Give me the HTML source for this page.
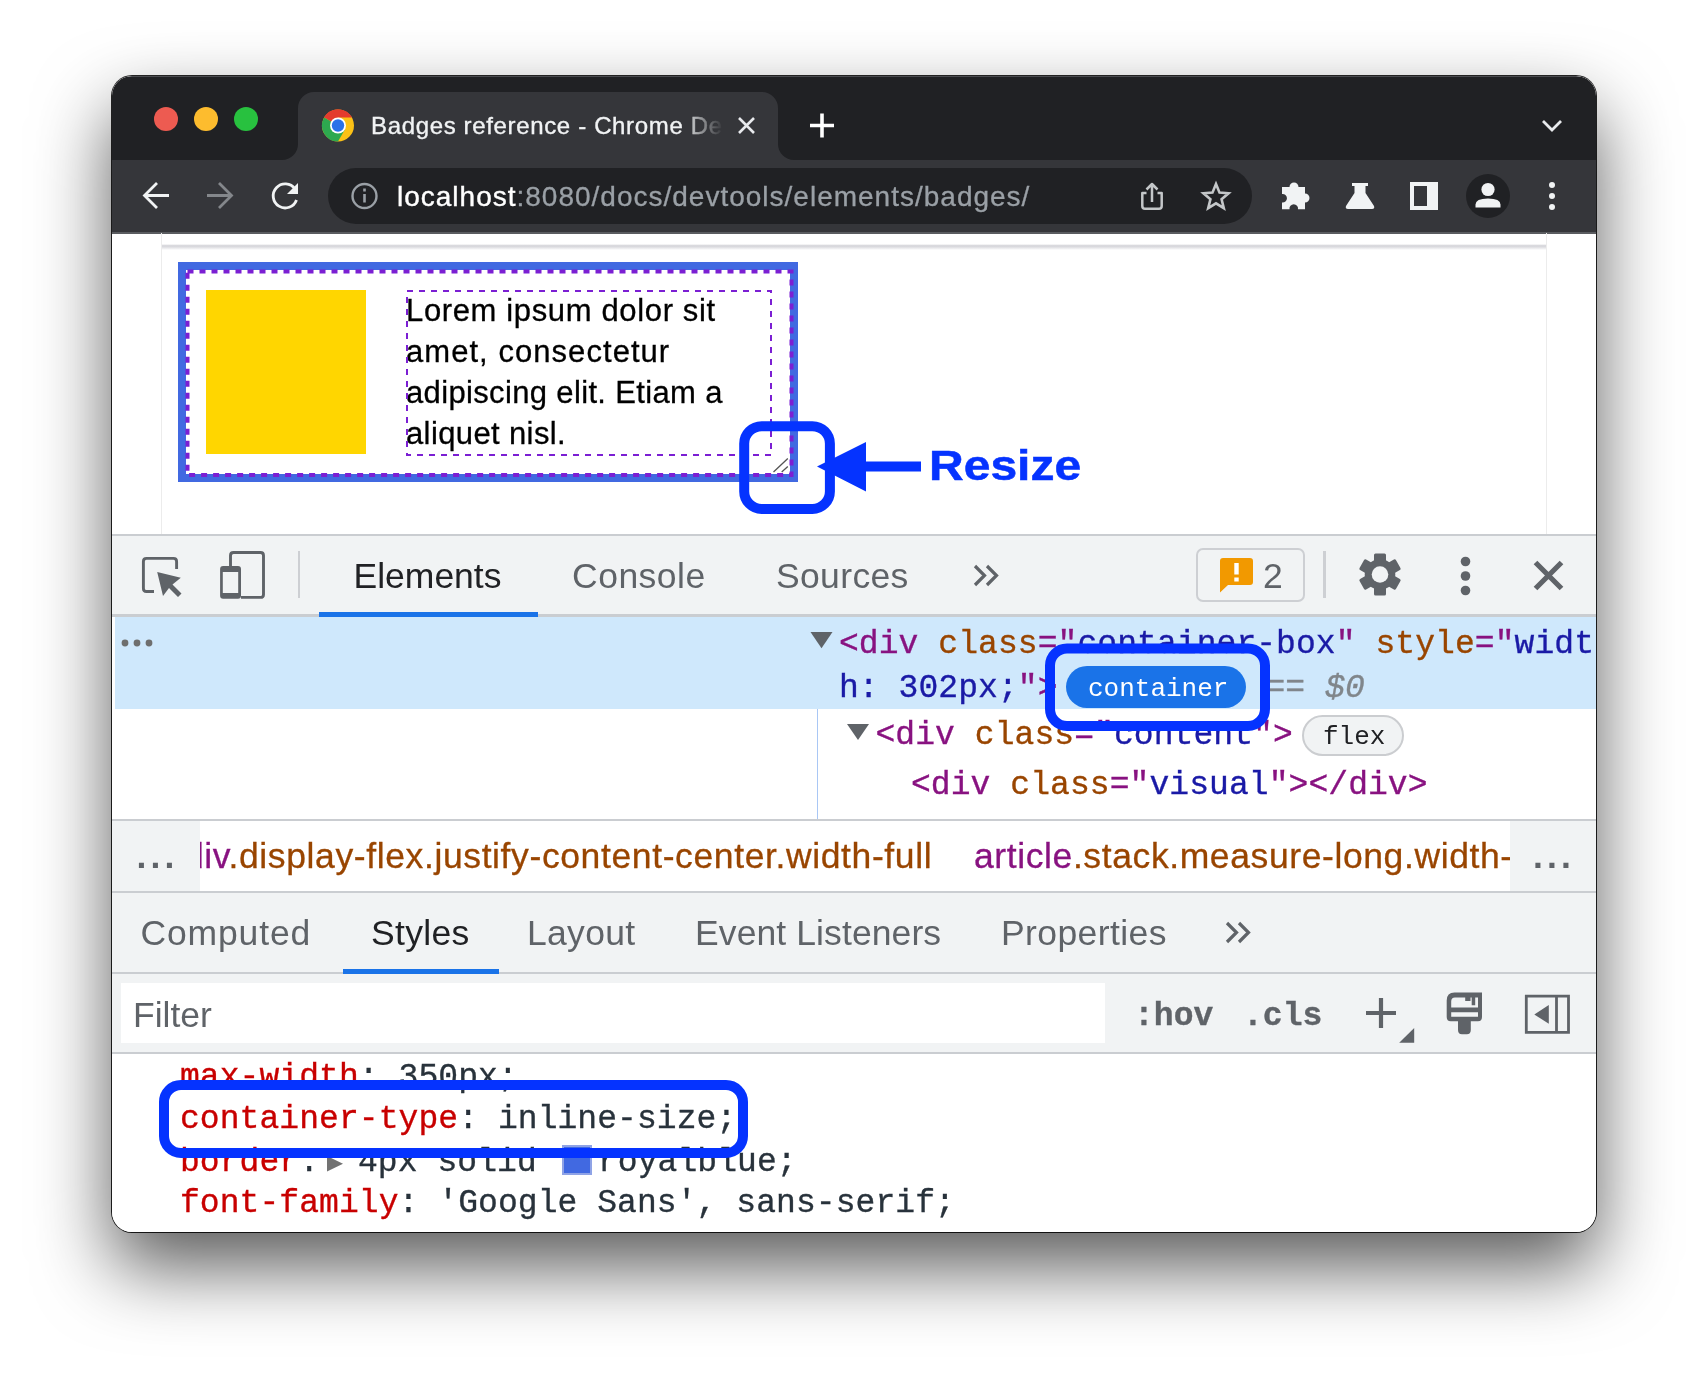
<!DOCTYPE html>
<html><head><meta charset="utf-8">
<style>
html,body{margin:0;padding:0;background:#fff;}
body{width:1708px;height:1380px;position:relative;overflow:hidden;font-family:"Liberation Sans",sans-serif;}
#win{position:absolute;left:112px;top:76px;width:1484px;height:1155.500px;border-radius:20px;overflow:hidden;background:#fff;}
#shadow{position:absolute;left:112px;top:76px;width:1484px;height:1155.500px;border-radius:20px;
 box-shadow:0 0 0 1px rgba(0,0,0,.85),0 35px 76px rgba(0,0,0,.65);}
#in{will-change:transform;position:absolute;left:-112px;top:-76px;width:1708px;height:1380px;}
#in *{position:absolute;box-sizing:border-box;margin:0;white-space:nowrap;}
.mono{font-family:"Liberation Mono",monospace;}
</style></head><body>
<div id="shadow"></div>
<div id="win"><div id="in">
<!-- CHROME -->
<div id="tabstrip" style="left:112px;top:75px;width:1484px;height:85px;background:#202124;"></div>
<div style="left:128px;top:76px;width:1452px;height:1px;background:#4b4c50;"></div>
<div id="toolbar" style="left:112px;top:160px;width:1484px;height:73.500px;background:#35363a;border-bottom:2px solid #5a5c60;"></div>
<svg style="left:0;top:0" width="1708" height="240" viewBox="0 0 1708 240">
 <path d="M282 160 A16 16 0 0 0 298 144 L298 108 A16 16 0 0 1 314 92 L762 92 A16 16 0 0 1 778 108 L778 144 A16 16 0 0 0 794 160 Z" fill="#35363a"/>
 <circle cx="166" cy="119" r="12" fill="#ed5b51"/>
 <circle cx="206" cy="119" r="12" fill="#fdbc2e"/>
 <circle cx="246" cy="119" r="12" fill="#28c13f"/>
 <!-- chrome logo -->
 <g transform="translate(338 125.5)">
  <circle r="16" fill="#fbc116"/>
  <path d="M0 0 L-13.86 -8 A16 16 0 0 1 13.86 -8 Z" fill="#e33b2e"/>
  <path d="M0 0 L-13.86 -8 A16 16 0 0 0 0 16 L6.9 4 Z" fill="#2da94f"/>
  <path d="M-13.86 -8 A16 16 0 0 1 13.86 -8 L0 -8 Z" fill="#e33b2e"/>
  <path d="M0 -8 L13.86 -8 L6.9 4Z" fill="#fbc116"/>
  <circle r="8" fill="#fff"/>
  <circle r="6.2" fill="#2a71e8"/>
 </g>
 <!-- tab close -->
 <path d="M739 118 L754 133 M754 118 L739 133" stroke="#e8eaed" stroke-width="2.6" fill="none"/>
 <!-- new tab plus -->
 <path d="M810 125.5 H834 M822 113.5 V137.5" stroke="#fff" stroke-width="3.6" fill="none"/>
 <!-- chevron -->
 <path d="M1543 121 L1552 130 L1561 121" stroke="#e8eaed" stroke-width="2.8" fill="none"/>
 <!-- omnibox -->
 <rect x="328" y="168" width="924" height="56" rx="28" fill="#202124"/>
 <!-- back -->
 <path d="M169 195.5 H145 M157 183 L144.5 195.5 L157 208" stroke="#f1f3f4" stroke-width="2.8" fill="none" stroke-linejoin="miter"/>
 <!-- forward -->
 <path d="M207 195.5 H231 M219 183 L231.500 195.5 L219 208" stroke="#84878b" stroke-width="2.8" fill="none"/>
 <!-- reload -->
 <path d="M295 189 A12 12 0 1 0 296.500 200" stroke="#f1f3f4" stroke-width="2.8" fill="none"/>
 <path d="M298 183 V194 H287 Z" fill="#f1f3f4"/>
 <!-- info -->
 <circle cx="364.500" cy="196" r="12" stroke="#9aa0a6" stroke-width="2.4" fill="none"/>
 <path d="M364.500 194 V202.500 M364.500 188.500 V191.500" stroke="#9aa0a6" stroke-width="2.6" fill="none"/>
 <!-- share -->
 <path d="M1146.500 193 H1142.300 V206 Q1142.300 208.800 1145 208.800 H1159 Q1161.700 208.800 1161.700 206 V193 H1157.500 M1152 202 V184.500 M1146.500 189.500 L1152 184 L1157.500 189.500" stroke="#c4c7c9" stroke-width="2.500" fill="none" stroke-linejoin="round"/>
 <!-- star -->
 <path transform="translate(1216 197) scale(.93) translate(-1216 -197)" d="M1216 183 L1219.800 192.300 L1229.500 193 L1222 199.400 L1224.400 209 L1216 203.800 L1207.600 209 L1210 199.400 L1202.500 193 L1212.200 192.300 Z" stroke="#c4c7c9" stroke-width="2.800" fill="none" stroke-linejoin="miter"/>
 <!-- puzzle -->
 <path d="M1282 187 H1289.500 A4.500 4.500 0 1 1 1298.500 187 H1305 V193.500 A4.500 4.500 0 1 1 1305 202.500 V209.300 H1298 A4.300 4.300 0 1 0 1289.500 209.300 H1282 V202.500 A4.300 4.300 0 1 0 1282 194 Z" fill="#f1f3f4"/>
 <!-- flask -->
 <path d="M1352 183 H1368 V186 H1365.500 V193 L1374 206 Q1375 209 1372 209 H1348 Q1345 209 1346 206 L1354.500 193 V186 H1352 Z" fill="#f1f3f4"/>
 <!-- side panel -->
 <path d="M1410 182 H1438 V210 H1410 Z M1414 186 V206 H1427 V186 Z" fill="#f1f3f4" fill-rule="evenodd"/>
 <!-- avatar -->
 <circle cx="1488" cy="196" r="22" fill="#202124"/>
 <circle cx="1488" cy="189.500" r="6.600" fill="#f1f3f4"/>
 <path d="M1475.500 207.500 V204.500 Q1475.500 198.500 1488 198.500 Q1500.500 198.500 1500.500 204.500 V207.500 Z" fill="#f1f3f4"/>
 <!-- menu dots -->
 <circle cx="1552" cy="185" r="3" fill="#f1f3f4"/><circle cx="1552" cy="196" r="3" fill="#f1f3f4"/><circle cx="1552" cy="207" r="3" fill="#f1f3f4"/>
</svg>
<div id="tabtitle" style="-webkit-text-stroke:.35px #f1f3f4;left:371px;top:112px;font-size:24px;line-height:28px;color:#f1f3f4;width:352px;overflow:hidden;letter-spacing:.65px;-webkit-mask-image:linear-gradient(90deg,#000 88%,transparent 100%);">Badges reference - Chrome Developers</div>
<div id="url" style="-webkit-text-stroke:.3px currentColor;left:397px;top:181px;font-size:28px;line-height:32px;color:#9aa0a6;letter-spacing:1px;"><span style="position:static;color:#fff;-webkit-text-stroke:.4px #fff">localhost</span>:8080/docs/devtools/elements/badges/</div>
<!-- PAGE -->
<div style="left:161px;top:233px;width:1px;height:302px;background:#ececec;"></div>
<div style="left:1546px;top:233px;width:1px;height:302px;background:#ececec;"></div>
<div style="left:162px;top:244px;width:1384px;height:6px;background:linear-gradient(#fff 0,#d2d2d7 30%,#e6e6e9 65%,#fff 100%);"></div>
<div style="left:178px;top:262px;width:620px;height:220px;border:8px solid #4169e1;"></div>
<div style="left:206px;top:290px;width:160px;height:164px;background:#ffd600;"></div>
<div id="lorem" style="left:406px;top:290px;font-size:31px;line-height:41px;color:#000;letter-spacing:0px;white-space:pre;-webkit-text-stroke:.3px #000;"><span style="position:static;letter-spacing:.64px">Lorem ipsum dolor sit</span>
<span style="position:static;letter-spacing:1.05px">amet, consectetur</span>
<span style="position:static;letter-spacing:.35px">adipiscing elit. Etiam a</span>
<span style="position:static;letter-spacing:.38px">aliquet nisl.</span></div>
<svg style="left:0;top:233px" width="1708" height="302" viewBox="0 233 1708 302">
 <rect x="187.500" y="271.500" width="604" height="203.600" fill="none" stroke="#7b1fd3" stroke-width="4" stroke-dasharray="6 6"/>
 <rect x="407" y="291" width="364" height="164" fill="none" stroke="#7b1fd3" stroke-width="2" stroke-dasharray="6 6"/>
 <path d="M773.500 472 L787.800 458.500 M781.700 472 L787.800 466.400" stroke="#555" stroke-width="1.300" fill="none"/>
 <rect x="744.200" y="426.200" width="85.700" height="82.700" rx="17.500" fill="none" stroke="#0533ff" stroke-width="10"/>
 <path d="M817 466.500 L866 442 V461.500 H921 V471.500 H866 V491.500 Z" fill="#0533ff"/>
</svg>
<div id="resize" style="left:928.500px;top:440.500px;font-size:42.500px;line-height:50px;font-weight:bold;color:#0533ff;transform-origin:0 0;transform:scaleX(1.13);-webkit-text-stroke:.5px #0533ff;">Resize</div>
<!-- DEVTOOLS -->
<style>
.bar{left:112px;width:1484px;background:#f1f3f4;}
.ln{left:112px;width:1484px;background:#cacdd1;}
.t36{font-size:35.5px;line-height:42px;color:#5f6368;}
.m33{font-family:"Liberation Mono",monospace;font-size:33px;line-height:40px;letter-spacing:.065px;-webkit-text-stroke:.35px currentColor;}
.tg{color:#881280}.an{color:#994500}.av{color:#1a1aa6}
#in span{position:static}
.pr{color:#c80000}.vl{color:#28323b}
</style>
<div class="ln" style="top:534px;height:2px;"></div>
<div class="bar" style="top:536px;height:78px;"></div>
<div class="ln" style="top:614px;height:2.500px;"></div>
<div style="left:319px;top:612px;width:219px;height:5px;background:#1a73e8;"></div>
<div id="tEl" class="t36" style="left:353.5px;top:555px;color:#202124;">Elements</div>
<div id="tCo" class="t36" style="letter-spacing:.5px;left:572px;top:555px;">Console</div>
<div id="tSo" class="t36" style="letter-spacing:.35px;left:776px;top:555px;">Sources</div>
<div style="left:1196px;top:547.500px;width:109px;height:54.500px;border:2.600px solid #cdcfd3;border-radius:7px;"></div>
<div id="t2" class="t36" style="left:1263px;top:555px;">2</div>
<div style="left:297.700px;top:551px;width:2.600px;height:47px;background:#cdcfd3;"></div>
<div style="left:1323.200px;top:551px;width:2.600px;height:47px;background:#cdcfd3;"></div>
<!-- dom tree -->
<div style="left:115px;top:617px;width:1481px;height:92px;background:#cfe8fc;"></div>
<div style="left:817px;top:709px;width:1px;height:110px;background:#a9c7f5;"></div>
<div id="r1" class="m33" style="left:839px;top:624.5px;"><span class="tg">&lt;div </span><span class="an">class</span><span class="tg">="</span><span class="av">container-box</span><span class="tg">" </span><span class="an">style</span><span class="tg">="</span><span class="av">widt</span></div>
<div id="r2" class="m33" style="left:839px;top:668.5px;"><span class="av">h: 302px;</span><span class="tg">"&gt;</span></div>
<div id="eq" class="m33" style="left:1265.500px;top:668.5px;color:#80868b;">== <span style="font-style:italic">$0</span></div>
<div style="left:1066px;top:666px;width:180px;height:42px;border-radius:21px;background:#1a73e8;"></div>
<div id="bc" class="mono" style="left:1088px;top:674px;font-size:26px;line-height:30px;color:#fff;">container</div>
<div id="r3" class="m33" style="left:875.500px;top:716px;"><span class="tg">&lt;div </span><span class="an">class</span><span class="tg">="</span><span class="av">content</span><span class="tg">"&gt;</span></div>
<div style="left:1301.500px;top:715px;width:102px;height:40.500px;border-radius:21px;background:#f1f3f4;border:2.500px solid #cbcdd0;"></div>
<div id="bf" class="mono" style="left:1323px;top:722px;font-size:26px;line-height:30px;color:#202124;">flex</div>
<div id="r4" class="m33" style="left:911px;top:766px;"><span class="tg">&lt;div </span><span class="an">class</span><span class="tg">="</span><span class="av">visual</span><span class="tg">"&gt;&lt;/div&gt;</span></div>
<!-- breadcrumbs -->
<div class="ln" style="top:818.500px;height:2.500px;"></div>
<div style="left:112px;top:821px;width:88px;height:70px;background:#f1f3f4;"></div>
<div style="left:1510px;top:821px;width:86px;height:70px;background:#f1f3f4;"></div>
<div class="t36" style="left:136.500px;top:834.500px;letter-spacing:4.100px;font-weight:bold;">...</div>
<div class="t36" style="left:1533px;top:834.500px;letter-spacing:4.100px;font-weight:bold;">...</div>
<div style="left:200px;top:821px;width:1310px;height:70px;overflow:hidden;">
 <div id="b1" class="t36" style="-webkit-text-stroke:.3px currentColor;letter-spacing:0.615px;left:-16.100px;top:13.5px;"><span class="tg">div</span><span class="an">.display-flex.justify-content-center.width-full</span></div>
 <div id="b2" class="t36" style="-webkit-text-stroke:.3px currentColor;letter-spacing:0.6px;left:774px;top:13.5px;"><span class="tg">article</span><span class="an">.stack.measure-long.width-full.pad</span></div>
</div>
<div class="ln" style="top:890.500px;height:2.500px;"></div>
<!-- styles tabs -->
<div class="bar" style="top:893px;height:79px;"></div>
<div id="sCo" class="t36" style="letter-spacing:0.85px;left:140.5px;top:912px;">Computed</div>
<div id="sSt" class="t36" style="letter-spacing:0.3px;left:371px;top:912px;color:#202124;">Styles</div>
<div id="sLa" class="t36" style="letter-spacing:0.3px;left:527px;top:912px;">Layout</div>
<div id="sEv" class="t36" style="letter-spacing:0.1px;left:695px;top:912px;">Event Listeners</div>
<div id="sPr" class="t36" style="letter-spacing:0.4px;left:1001px;top:912px;">Properties</div>
<div class="ln" style="top:971.500px;height:2.500px;"></div>
<div style="left:343px;top:969px;width:156px;height:5px;background:#1a73e8;"></div>
<!-- filter -->
<div class="bar" style="top:974px;height:78px;"></div>
<div style="left:121px;top:982.500px;width:984px;height:60px;background:#fff;"></div>
<div id="fi" class="t36" style="left:133px;top:993.5px;">Filter</div>
<div id="hov" class="m33" style="left:1134px;top:996.500px;font-weight:bold;color:#5f6368;">:hov</div>
<div id="cls" class="m33" style="left:1243px;top:996.500px;font-weight:bold;color:#5f6368;">.cls</div>
<div class="ln" style="top:1051.500px;height:2.500px;"></div>
<!-- css -->
<div id="c1" class="m33" style="left:180px;top:1058px;"><span class="pr">max-width</span><span class="vl">: 350px;</span></div>
<div id="c2" class="m33" style="left:180px;top:1100px;"><span class="pr">container-type</span><span class="vl">: inline-size;</span></div>
<div id="c3" class="m33" style="left:180px;top:1142.5px;"><span class="pr">border</span><span class="vl">:</span></div>
<div id="c3b" class="m33 vl" style="left:358px;top:1142.5px;">4px solid</div>
<div style="left:562px;top:1145px;width:30px;height:30px;background:#4169e1;border:2px solid #8fa3e6;"></div>
<div id="c3c" class="m33 vl" style="left:598px;top:1142.5px;">royalblue;</div>
<div id="c4" class="m33" style="left:180px;top:1184px;"><span class="pr">font-family</span><span class="vl">: 'Google Sans', sans-serif;</span></div>
<svg style="left:0;top:535px" width="1708" height="700" viewBox="0 535 1708 700">
 <!-- inspect icon -->
 <path d="M154 591.500 H146.500 Q143.400 591.500 143.400 588.500 V561.400 Q143.400 558.400 146.500 558.400 H173.500 Q176.600 558.400 176.600 561.400 V569" stroke="#5f6368" stroke-width="2.900" fill="none"/>
 <path d="M157.200 572 L180.800 577.800 L172.500 584.500 L181.500 593.500 L178 597 L169 588 L163 596 Z" fill="#5f6368"/>
 <!-- device icon -->
 <path d="M230.500 566 V555.500 Q230.500 552.500 233.500 552.500 H260.500 Q263.500 552.500 263.500 555.500 V594.400 Q263.500 597.400 260.500 597.400 H241" stroke="#5f6368" stroke-width="2.900" fill="none"/>
 <path d="M223.100 566 H238 Q241 566 241 569 V595.800 Q241 598.800 238 598.800 H223.100 Q220.100 598.800 220.100 595.800 V569 Q220.100 566 223.100 566 Z M222.800 572 V592.900 H238.200 V572 Z" fill="#5f6368" fill-rule="evenodd"/>
 <!-- chevrons -->
 <path d="M975 566 L984.500 575.500 L975 585 M987 566 L996.500 575.500 L987 585" stroke="#5f6368" stroke-width="3.200" fill="none"/>
 <path d="M1227 923 L1236.500 932.500 L1227 942 M1239 923 L1248.500 932.500 L1239 942" stroke="#5f6368" stroke-width="3.200" fill="none"/>
 <!-- issue icon -->
 <path d="M1223 558 H1250 Q1253 558 1253 561 V582 Q1253 585 1250 585 H1228 L1220 592.500 V561 Q1220 558 1223 558 Z" fill="#f29900"/>
 <path d="M1236.500 563 V574.500 M1236.500 577.500 V581.500" stroke="#fff" stroke-width="4.400" fill="none"/>
 <!-- gear -->
 <g transform="translate(1380 574.500)" fill="#5f6368">
  <circle r="15.300"/>
  <g id="teeth"><rect x="-6" y="-21" width="12" height="42" rx="1.500"/><rect x="-6" y="-21" width="12" height="42" rx="1.500" transform="rotate(60)"/><rect x="-6" y="-21" width="12" height="42" rx="1.500" transform="rotate(120)"/></g>
  <circle r="8.300" fill="#f1f3f4"/>
 </g>
 <!-- kebab -->
 <circle cx="1465.500" cy="561.500" r="4.800" fill="#5f6368"/><circle cx="1465.500" cy="576" r="4.800" fill="#5f6368"/><circle cx="1465.500" cy="590.500" r="4.800" fill="#5f6368"/>
 <!-- close -->
 <path d="M1535.500 562.500 L1561.500 588.500 M1561.500 562.500 L1535.500 588.500" stroke="#5f6368" stroke-width="5.200" fill="none"/>
 <!-- dom dots -->
 <circle cx="125" cy="643" r="3.400" fill="#6e6e6e"/><circle cx="137" cy="643" r="3.400" fill="#6e6e6e"/><circle cx="149" cy="643" r="3.400" fill="#6e6e6e"/>
 <!-- triangles -->
 <path d="M810.500 632 H832.500 L821.500 648.300 Z" fill="#5f6368"/>
 <path d="M847 724 H869 L858 740 Z" fill="#5f6368"/>
 <path d="M327 1156 L343 1163.750 L327 1171.500 Z" fill="#727272"/>
 <!-- plus -->
 <path d="M1366 1013 H1396 M1381 998 V1028" stroke="#5f6368" stroke-width="4.200" fill="none"/>
 <path d="M1414.200 1028 V1042.800 H1399.200 Z" fill="#5f6368"/>
 <!-- brush -->
 <path d="M1454.500 992.500 H1482 V1017 Q1482 1021.200 1478 1021.200 H1470.800 V1030 Q1470.800 1034.200 1466.800 1034.200 H1462 Q1458 1034.200 1458 1030 V1021.200 H1450.700 Q1446.700 1021.200 1446.700 1017 V1000.500 Q1446.700 992.500 1454.500 992.500 Z M1455 997.600 Q1451.200 997.600 1451.200 1001.500 V1007.400 H1478 V997.600 H1475.200 V1005.300 H1471.700 V997.600 H1470.500 V1001.100 H1465.200 V997.600 Z M1451.200 1012.300 V1016.800 H1478 V1012.300 Z" fill="#5f6368" fill-rule="evenodd"/>
 <!-- sidebar toggle -->
 <path d="M1526.300 996.200 H1568.500 V1032.400 H1526.300 Z M1556.500 996.200 V1032.400" stroke="#5f6368" stroke-width="2.800" fill="none"/>
 <path d="M1548.800 1005 V1023.800 L1534.300 1014.400 Z" fill="#5f6368"/>
 <!-- annotations -->
 <rect x="1050" y="648.500" width="215" height="77.500" rx="17" fill="none" stroke="#0533ff" stroke-width="10"/>
 <rect x="164" y="1085" width="579" height="68" rx="17" fill="none" stroke="#0533ff" stroke-width="10"/>
</svg>
</div></div>
</body></html>
